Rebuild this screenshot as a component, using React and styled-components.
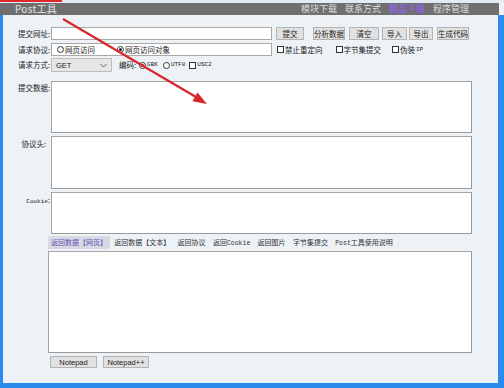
import React from 'react'
import styled, {createGlobalStyle} from 'styled-components'

const GlobalStyle = createGlobalStyle`
  html, body {
    margin: 0;
    padding: 0;
    background: #edf2f6;
  }
  body {
    font-family: 'Noto Sans CJK SC', 'Liberation Sans', sans-serif;
    color: #222;
  }
`
const Window = styled.div`
  position: relative;
  width: 504px;
  height: 388px;
  display: flex;
  flex-direction: column;
  overflow: hidden;
  background: #edf2f6;
`
const TopStrip = styled.div`
  height: 3px;
  background: #e4ecf3;
`
const RedMark = styled.div`
  width: 62px;
  height: 2px;
  background: #e0262b;
`
const TitleBar = styled.div`
  height: 12px;
  background: #6f6f6f;
  display: flex;
  align-items: center;
  justify-content: space-between;
  padding: 0 30px 0 15px;
  margin-right: 5px;
`
const Title = styled.span`
  color: #e6e6e6;
  font-size: 10px;
  line-height: 12px;
  letter-spacing: 0.3px;
`
const Menu = styled.div`
  display: flex;
  gap: 8px;
`
const MenuItem = styled.span`
  color: ${(props) => props.active ? '#8f63df' : '#dedede'};
  font-weight: ${(props) => props.active ? 'bold' : 'normal'};
  font-size: 9px;
  line-height: 12px;
`
const Frame = styled.div`
  flex: 1;
  display: flex;
  flex-direction: column;
  border-left: 3px solid #2a8cee;
  border-right: 6px solid #2a8cee;
  border-bottom: 5px solid #2a8cee;
  padding-top: 12px;
  font-size: 7.5px;
`
const Row = styled.div`
  display: flex;
  align-items: ${(props) => props.top ? 'flex-start' : 'center'};
  margin-bottom: ${(props) => props.mb || 3}px;
`
const Label = styled.div`
  width: ${(props) => props.w || 48}px;
  padding-right: ${(props) => props.pr || 1}px;
  box-sizing: border-box;
  text-align: right;
  line-height: 10px;
  margin-top: ${(props) => props.mt || 0}px;
`
const TextInput = styled.div`
  width: 221px;
  height: 13px;
  box-sizing: border-box;
  background: #fff;
  border: 1px solid #a9a9a9;
`
const Button = styled.div`
  width: ${(props) => props.w}px;
  margin-left: ${(props) => props.ml}px;
  height: 13px;
  box-sizing: border-box;
  background: #e1e1e1;
  border: 1px solid #b4b4b4;
  display: flex;
  align-items: center;
  justify-content: center;
  line-height: 11px;
`
const RadioBox = styled.div`
  width: 221px;
  height: 13px;
  box-sizing: border-box;
  background: #fff;
  border: 1px solid #a9a9a9;
  display: flex;
  align-items: center;
  padding-left: 5px;
  gap: 22px;
`
const Option = styled.label`
  display: flex;
  align-items: center;
  gap: ${(props) => props.gap || 1}px;
  margin-left: ${(props) => props.ml || 0}px;
  line-height: 10px;
`
const Radio = styled.span`
  width: 7px;
  height: 7px;
  box-sizing: border-box;
  border: 1px solid #333;
  border-radius: 50%;
  background: #fff;
  display: flex;
  align-items: center;
  justify-content: center;
  &::after {
    content: '';
    display: ${(props) => props.on ? 'block' : 'none'};
    width: 3px;
    height: 3px;
    border-radius: 50%;
    background: #222;
  }
`
const Check = styled.span`
  width: 7px;
  height: 7px;
  box-sizing: border-box;
  border: 1px solid #333;
  background: #fff;
`
const Small = styled.span`
  font-family: 'Liberation Mono', monospace;
  font-size: ${(props) => props.size || 6}px;
  color: inherit;
`
const Select = styled.div`
  width: 61px;
  height: 14px;
  box-sizing: border-box;
  background: #e6e6e6;
  border: 1px solid #bdbdbd;
  display: flex;
  align-items: center;
  justify-content: space-between;
  padding: 0 4px 0 4px;
  font-family: 'Liberation Sans', sans-serif;
  font-size: 7.5px;
`
const Area = styled.div`
  width: ${(props) => props.w || 421}px;
  height: ${(props) => props.h}px;
  box-sizing: border-box;
  background: #fff;
  border: 1px solid #a6a6a6;
  border-right-color: #9a9a9a;
  border-bottom-color: #9a9a9a;
`
const Lower = styled.div`
  padding-left: 45px;
  display: flex;
  flex-direction: column;
`
const Tabs = styled.div`
  display: flex;
  height: 13px;
  align-items: center;
  margin-bottom: 2px;
  font-size: 7px;
`
const Tab = styled.div`
  height: 13px;
  line-height: 13px;
  padding: 0 3px;
  margin-right: 1.3px;
  background: ${(props) => props.active ? '#d5dbe1' : 'transparent'};
  color: ${(props) => props.active ? '#6b4bbd' : '#333'};
`
const Bottom = styled.div`
  display: flex;
  gap: 6px;
  margin-top: 3px;
  padding-left: 2px;
`
const PadButton = styled.div`
  width: ${(props) => props.w}px;
  height: 12px;
  box-sizing: border-box;
  background: #e1e1e1;
  border: 1px solid #b4b4b4;
  display: flex;
  align-items: center;
  justify-content: center;
  font-family: 'Liberation Sans', sans-serif;
  font-size: 7.5px;
`
const Overlay = styled.svg`
  position: absolute;
  left: 0;
  top: 0;
  pointer-events: none;
`

const buttons = [
  {t: '提交', w: 28, ml: 4},
  {t: '分析数据', w: 32, ml: 9},
  {t: '清空', w: 30, ml: 4},
  {t: '导入', w: 25, ml: 3},
  {t: '导出', w: 24, ml: 2},
  {t: '生成代码', w: 32, ml: 4},
]
const tabs = [
  {key: 'web', body: '返回数据【网页】', active: true},
  {key: 'text', body: '返回数据【文本】'},
  {key: 'proto', body: '返回协议'},
  {key: 'cookie', body: <>返回<Small size={6.5}>Cookie</Small></>},
  {key: 'img', body: '返回图片'},
  {key: 'bytes', body: '字节集提交'},
  {key: 'help', body: <><Small size={6.5}>Post</Small>工具使用说明</>},
]

export default function App() {
  return (
    <Window>
      <GlobalStyle/>
      <TopStrip><RedMark/></TopStrip>
      <TitleBar>
        <Title>Post工具</Title>
        <Menu>
          <MenuItem>模块下载</MenuItem>
          <MenuItem>联系方式</MenuItem>
          <MenuItem active>精品下载</MenuItem>
          <MenuItem>程序管理</MenuItem>
        </Menu>
      </TitleBar>
      <Frame>
        <Row>
          <Label>提交网址:</Label>
          <TextInput/>
          {buttons.map((b) => <Button key={b.t} w={b.w} ml={b.ml}>{b.t}</Button>)}
        </Row>
        <Row mb={2}>
          <Label>请求协议:</Label>
          <RadioBox>
            <Option><Radio/>网页访问</Option>
            <Option><Radio on/>网页访问对象</Option>
          </RadioBox>
          <Option ml={5} gap={1}><Check/>禁止重定向</Option>
          <Option ml={13} gap={1}><Check/>字节集提交</Option>
          <Option ml={11} gap={1}><Check/>伪装<Small>IP</Small></Option>
        </Row>
        <Row mb={9}>
          <Label>请求方式:</Label>
          <Select>
            <span>GET</span>
            <svg width="7" height="5" viewBox="0 0 7 5">
              <path d="M0.5 1 L3.5 4 L6.5 1" fill="none" stroke="#666" strokeWidth="1"/>
            </svg>
          </Select>
          <Option ml={7}>编码:</Option>
          <Option ml={3} gap={1}><Radio on/><Small>GBK</Small></Option>
          <Option ml={5} gap={1}><Radio/><Small>UTF8</Small></Option>
          <Option ml={4} gap={1}><Check/><Small>USC2</Small></Option>
        </Row>
        <Row top>
          <Label mt={2}>提交数据:</Label>
          <Area h={52}/>
        </Row>
        <Row top>
          <Label pr={5} mt={3}>协议头:</Label>
          <Area h={53}/>
        </Row>
        <Row top mb={2}>
          <Label mt={3}><Small>Cookie</Small>:</Label>
          <Area h={42}/>
        </Row>
        <Lower>
          <Tabs>
            {tabs.map((t) => <Tab key={t.key} active={t.active}>{t.body}</Tab>)}
          </Tabs>
          <Area w={424} h={102}/>
          <Bottom>
            <PadButton w={47}>Notepad</PadButton>
            <PadButton w={46}>Notepad++</PadButton>
          </Bottom>
        </Lower>
      </Frame>
      <Overlay width="504" height="388">
        <line x1="63" y1="19" x2="196" y2="97" stroke="#d8262b" strokeWidth="2.2"/>
        <polygon points="207,104 192.4,101.2 197.5,92.6" fill="#d8262b"/>
      </Overlay>
    </Window>
  )
}
